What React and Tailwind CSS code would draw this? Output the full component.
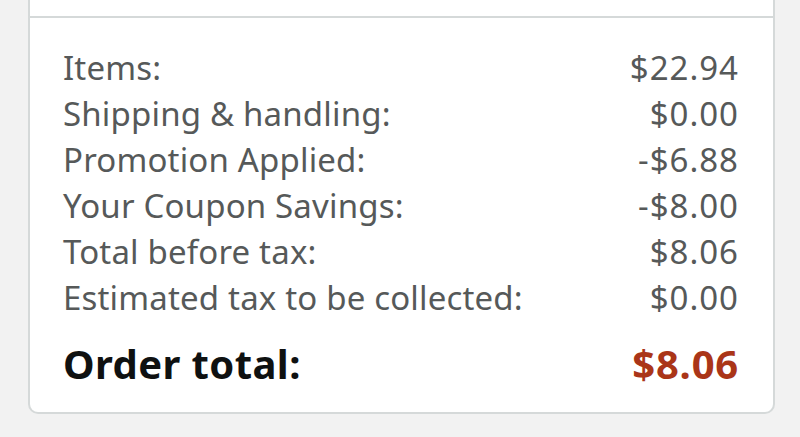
export default function App() {
  const rows = [
    ["Items:", "$22.94"],
    ["Shipping & handling:", "$0.00"],
    ["Promotion Applied:", "-$6.88"],
    ["Your Coupon Savings:", "-$8.00"],
    ["Total before tax:", "$8.06"],
    ["Estimated tax to be collected:", "$0.00"],
  ];
  return (
    <div className="w-[800px] h-[437px] bg-[#f2f2f2] overflow-hidden" style={{ fontFamily: '"Noto Sans", "Open Sans", sans-serif' }}>
      <div className="ml-[28px] w-[747px] bg-white border-x-2 border-b-2 border-[#d5d9d9] rounded-b-[10px]">
        <div className="h-[18px] border-b-2 border-[#d5d9d9]" />
        <div className="pl-[33px] pr-[34px] pt-[27px] pb-[25px]">
          {rows.map(([l, v]) => (
            <div key={l} className="flex justify-between text-[33px] leading-[46px] text-[#565959]">
              <span className="tracking-[0.17px]">{l}</span>
              <span className="tracking-[1px]">{v}</span>
            </div>
          ))}
          <div className="mt-[20px] flex justify-between text-[40px] leading-[46px] font-bold">
            <span className="text-[#0f1111] tracking-[0.4px]">Order total:</span>
            <span className="text-[#aa3518] tracking-[0.8px]">$8.06</span>
          </div>
        </div>
      </div>
    </div>
  );
}
